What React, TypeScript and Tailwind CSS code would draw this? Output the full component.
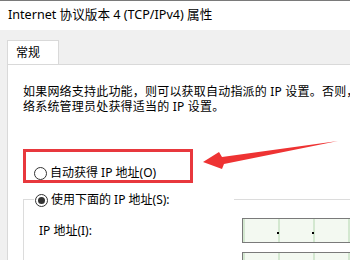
import React from "react";

const font = { fontFamily: '"Noto Sans", "Noto Sans CJK SC", sans-serif' };

function IpInput() {
  return (
    <div className="flex h-[25px] w-[140px] shrink-0 border border-[#7a7a7a] bg-[#f3f9f1]">
      <div className="relative w-[37px] border-l-2 border-r-2 border-[#d3e8d0]">
        <span className="absolute right-[-1px] top-[13px] h-[2px] w-[2px] bg-black" />
      </div>
      <div className="relative w-[35px] border-r-2 border-[#d3e8d0]">
        <span className="absolute right-[-1px] top-[13px] h-[2px] w-[2px] bg-black" />
      </div>
      <div className="w-[35px] border-r-2 border-[#d3e8d0]" />
      <div className="flex-1" />
    </div>
  );
}

export default function App() {
  return (
    <div
      className="relative h-[260px] w-[350px] overflow-hidden bg-[#f0f0f0] text-[12px] text-black"
      style={font}
    >
      <div className="flex h-[30px] items-center border-t border-[#7a7a7a] bg-white pl-[8px] text-[12.6px] leading-none">
        Internet 协议版本 4 (TCP/IPv4) 属性
      </div>
      <div className="pl-[7px] pt-[10px]">
        <div className="flex h-[24px] w-[52px] items-center border border-b-0 border-[#d9d9d9] bg-white pl-[8px]">
          常规
        </div>
        <div className="h-[200px] border-l border-t border-[#d9d9d9] bg-white pl-[15px] pt-[19px]">
          <div className="whitespace-nowrap leading-[15px] tracking-[0.2px]">
            <div>如果网络支持此功能，则可以获取自动指派的 IP 设置。否则，你需要从网</div>
            <div>络系统管理员处获得适当的 IP 设置。</div>
          </div>
          <div className="mt-[51px] flex h-[16px] items-center pl-[11px]">
            <span className="h-[13px] w-[13px] rounded-full border border-[#333]" />
            <span className="ml-[3px]">自动获得 IP 地址(O)</span>
          </div>
          <div className="mt-[18px] border-l border-t border-[#dcdcdc]">
            <div className="-mt-[8px] flex h-[16px]">
              <div className="ml-[10px] flex w-[200px] items-center bg-white pl-[1px]">
                <span className="flex h-[13px] w-[13px] items-center justify-center rounded-full border border-[#333]">
                  <span className="h-[7px] w-[7px] rounded-full bg-[#333]" />
                </span>
                <span className="ml-[3px]">使用下面的 IP 地址(S):</span>
              </div>
            </div>
            <div className="mt-[10px] flex h-[25px] items-center pl-[15px]">
              <span className="w-[203px] shrink-0">IP 地址(I):</span>
              <IpInput />
            </div>
            <div className="mt-[9px] flex h-[25px] items-center pl-[15px]">
              <span className="w-[203px] shrink-0 pt-[10px]">子网掩码(U):</span>
              <IpInput />
            </div>
          </div>
        </div>
      </div>
      <div className="pointer-events-none absolute left-[23px] top-[149px] h-[34px] w-[170px] border-[3px] border-[#e8383d]" />
      <svg
        className="pointer-events-none absolute left-0 top-0"
        width="350"
        height="260"
        viewBox="0 0 350 260"
      >
        <polygon
          points="203,162 219,152 222,157 338,141 224,164 222,169"
          fill="#ee3333"
        />
      </svg>
    </div>
  );
}
